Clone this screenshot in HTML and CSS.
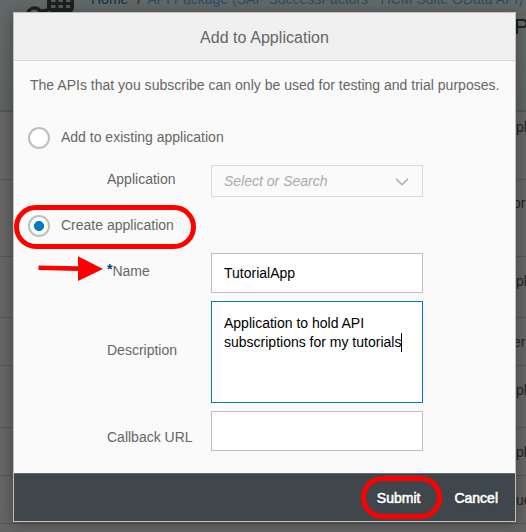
FILE: index.html
```html
<!DOCTYPE html>
<html lang="en">
<head>
<meta charset="utf-8">
<title>Add to Application</title>
<link rel="stylesheet" href="styles.css">
</head>
<body>
<div class="page">
  <header class="page-head">
    <svg class="logo" width="52" height="32" viewBox="0 0 52 32" fill="none" stroke="#1d2021">
      <path d="M2 15a6.500 6.500 0 0 1 12.500-3" stroke-width="3.500"/>
      <path d="M12 12l10-2" stroke-width="3.500"/>
      <path d="M21-2h27v9q0 5-4 5H26q-5 0-5-5z" fill="#1d2021" stroke="none"/>
      <path d="M25 .5h4.500M32.500 .5h4.500M40 .5h4.500M25 6.500h4.500M32.500 6.500h4.500M40 6.500h4" stroke="#565c5c" stroke-width="3"/>
    </svg>
    <nav class="crumbs"><span class="home">Home</span><span class="slash">/</span><span class="crumb">API Package (SAP SuccessFactors - HCM Suite OData API)</span></nav>
    <h1 class="page-title">P</h1>
  </header>
  <main class="rows">
    <div class="row r1">pl</div>
    <div class="row r2"><span class="clip">orm</span></div>
    <div class="row r3">pl</div>
    <div class="row r4"><span class="clip">er</span></div>
    <div class="row r5">pl</div>
    <div class="row r6">pl</div>
    <div class="row r7">ue</div>
  </main>
</div>

<section class="dialog">
  <header class="dialog-head">Add to Application</header>
  <div class="dialog-body">
    <p class="intro">The APIs that you subscribe can only be used for testing and trial purposes.</p>
    <div class="choice"><span class="radio"></span><span class="choice-text existing">Add to existing application</span></div>
    <div class="field"><span class="label l-app">Application</span>
      <div class="box select"><span class="placeholder">Select or Search</span>
        <svg width="14" height="9" viewBox="0 0 14 9" fill="none" stroke="#aaa" stroke-width="1.400"><path d="M1 1.700l6 6 6-6"/></svg>
      </div>
    </div>
    <div class="choice second"><span class="radio on"></span><span class="choice-text create">Create application</span>
      <i class="ring ring-create"></i>
    </div>
    <div class="field"><span class="label l-name"><b class="star">*</b>Name</span><div class="box name"><span class="app-name">TutorialApp</span></div>
      <svg class="arrow" width="66" height="26" viewBox="0 0 66 26" fill="#f00"><path d="M.5 9.500L40 10.300V.300L65 13 40 25V15L.5 14z"/></svg>
    </div>
    <div class="field"><span class="label l-desc">Description</span><div class="box area"><div class="line first">Application to hold API</div><div class="line"><span class="sub">subscriptions for my tutorials</span><i class="caret"></i></div></div></div>
    <div class="field"><span class="label l-url">Callback URL</span><div class="box url"></div></div>
  </div>
  <footer class="dialog-foot">
    <span class="button submit">Submit<i class="ring ring-submit"></i></span>
    <span class="button cancel">Cancel</span>
  </footer>
</section>
</body>
</html>
```
FILE: styles.css
```css
* { box-sizing: border-box; }
body {
  margin: 0;
  width: 526px;
  height: 532px;
  overflow: hidden;
  position: relative;
  background: #646464;
  font: 14px/18px "Liberation Sans", Arial, sans-serif;
  color: #666;
}
.page { height: 532px; overflow: hidden; }
.page-head {
  height: 112px;
  display: flex;
  background: linear-gradient(#626868, #5c6162);
  border-bottom: 2px solid #505455;
  white-space: nowrap;
}
.logo { flex: none; margin-left: 26px; }
.crumbs { flex: none; width: 434px; margin: -10px 0 0 13px; color: #284c63; }
.home { color: #07304c; }
.slash { margin: 0 6px 0 9px; color: #222; }
.page-title {
  flex: none;
  margin: 14px 0 0 -11px;
  font-size: 22px;
  line-height: 26px;
  font-weight: 400;
  color: #17191a;
}
.row {
  display: flex;
  align-items: center;
  padding-left: 516px;
  border-bottom: 1px solid #555;
  color: #232323;
  overflow: hidden;
}
.clip { margin-left: -3px; }
.r1 { height: 68px; padding-bottom: 37px; }
.r2 { height: 77px; padding-bottom: 30px; }
.r3 { height: 61px; padding-bottom: 13px; }
.r4 { height: 48px; }
.r5 { height: 62px; padding-bottom: 14px; }
.r6 { height: 48px; }
.r7 { height: 48px; }

/* The dialog floats over the dimmed page. */
.dialog {
  position: absolute;
  left: 13px;
  top: 12px;
  width: 503px;
  height: 510px;
  display: flex;
  flex-direction: column;
  border: 1px solid #bfbfbf;
  background: #fafafa;
  box-shadow: 0 2px 12px rgba(0, 0, 0, .32);
}
.dialog-head {
  height: 48px;
  flex: none;
  background: #f0f0f0;
  border-bottom: 1px solid #d5d5d5;
  text-align: center;
  font-size: 16px;
  line-height: 49px;
  letter-spacing: .05px;
}
.dialog-body { flex: 1; }
.intro { margin: 0; padding-left: 16px; height: 61px; line-height: 49px; white-space: nowrap; letter-spacing: .012px; }
.choice { position: relative; display: flex; align-items: center; height: 32px; padding-left: 14px; }
.radio {
  width: 22px;
  height: 22px;
  margin-right: 11px;
  border: 2px solid #bfbfbf;
  border-radius: 50%;
  background: #fff;
}
.radio.on { background: radial-gradient(circle, #007cc0 4.700px, #fff 5.300px); }
.choice-text { padding-bottom: 2px; }
.field { position: relative; display: flex; align-items: center; margin-bottom: 8px; padding-left: 93px; }
.label { width: 104px; white-space: nowrap; }
.l-app { padding-top: 2px; }
.l-name, .l-desc { padding-bottom: 4px; }
.l-url { padding-top: 12px; }
.star { color: #003d84; line-height: 1; vertical-align: 2px; }
.box { width: 212px; border: 1px solid #bfbfbf; background: #fff; padding: 0 12px; color: #000; display: flex; align-items: center; }
.select { height: 32px; margin: 11px 0 5px; border-color: #d9d9d9; background: #fafafa; justify-content: space-between; padding-right: 13px; }
.placeholder { color: #aaa; font-style: italic; }
.second { margin-bottom: 11px; }
.name, .url { height: 40px; }
.area { height: 102px; border-color: #007cc0; display: block; padding-top: 12px; }
.line { display: flex; height: 19px; line-height: 19px; white-space: nowrap; }
.caret { width: 1px; height: 19px; background: #000; }
.dialog-foot {
  flex: none;
  height: 48px;
  display: flex;
  align-items: center;
  justify-content: flex-end;
  padding-right: 17px;
  gap: 34px;
  background: #3f464c;
  border-top: 1px solid #5d6c77;
}
.button { position: relative; color: #fff; -webkit-text-stroke: .6px #fff; text-shadow: 0 1px 1px #222; }

/* Callout rings and arrow drawn over the controls. */
.ring { position: absolute; border: 5px solid #f00; border-radius: 22px; }
.ring-create { left: 0; top: -5px; width: 182px; height: 44px; }
.ring-submit { left: -16px; top: -13px; width: 81px; height: 43px; }
.arrow { position: absolute; left: 24px; top: 3px; }
```
